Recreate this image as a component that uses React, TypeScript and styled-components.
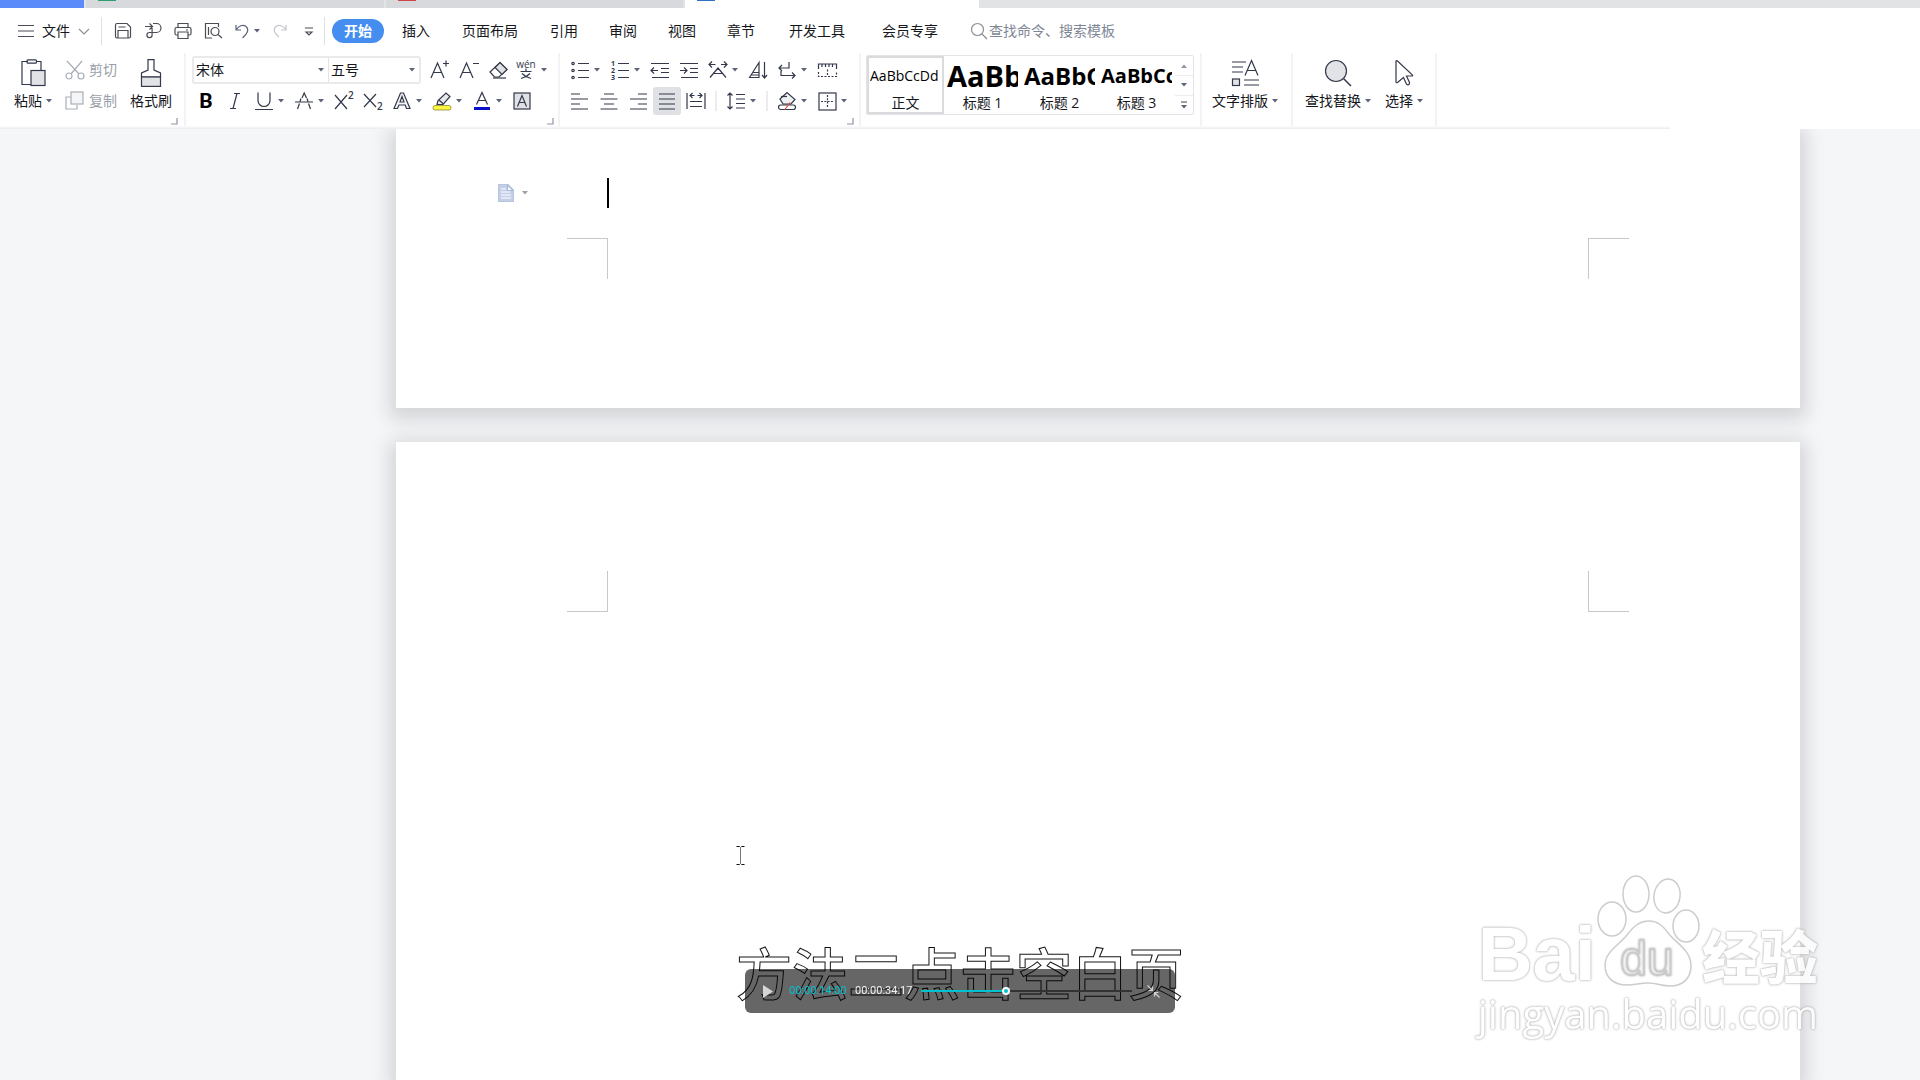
import React from "react";
import styled, { createGlobalStyle } from "styled-components";

const uiFont = `"Open Sans", "Noto Sans CJK SC", sans-serif`;
const ink = "#33384a";
const muted = "#a9adb6";

const GlobalStyle = createGlobalStyle`
  * { box-sizing: border-box; }
  body {
    margin: 0;
    background: #f5f6f8;
    color: #15171c;
    font-family: ${uiFont};
    font-size: 14px;
    line-height: 20px;
  }
  button, select, input { font: inherit; color: inherit; }
`;

const Screen = styled.div`
  display: flex;
  flex-direction: column;
  height: 100vh;
  overflow: hidden;
`;

/* ---------- window tabs ---------- */

const TabStrip = styled.nav`
  display: flex;
  height: 8px;
  background: #e2e3e5;
  overflow: hidden;
`;

const DocTab = styled.button<{ $width: number; $bg: string }>`
  display: flex;
  align-items: flex-start;
  width: ${(p) => p.$width}px;
  height: 8px;
  padding: 0 0 0 12px;
  border: 0;
  border-right: 2px solid #e2e3e5;
  background: ${(p) => p.$bg};
`;

const TabBadge = styled.span<{ $color: string }>`
  width: 18px;
  height: 1px;
  background: ${(p) => p.$color};
`;

/* ---------- header ---------- */

const Header = styled.header`
  position: relative;
  z-index: 1;
  flex: none;
  background: #fff;
`;

const HeaderEdge = styled.div`
  height: 3px;
  margin-right: 250px;
  background: linear-gradient(#fdfdfd, #ececee);
`;

const MenuBar = styled.div`
  display: flex;
  align-items: center;
  height: 45px;
  padding-left: 18px;
`;

const PlainButton = styled.button`
  display: flex;
  align-items: center;
  padding: 0;
  border: 0;
  background: none;
  white-space: nowrap;
`;

const FileButton = styled(PlainButton)`
  gap: 8px;
  margin-right: 11px;
`;

const BarRule = styled.span`
  width: 1px;
  height: 28px;
  background: #dfe0e3;
`;

const QuickTools = styled.div`
  display: flex;
  align-items: center;
  gap: 12px;
  padding: 0 10px 0 12px;
`;

const QuickButton = styled(PlainButton)`
  gap: 4px;
`;

const QuickMore = styled(QuickButton)`
  margin-left: 4px;
`;

const MenuTabs = styled.nav`
  display: flex;
  align-items: center;
  gap: 1px;
  padding-left: 7px;
`;

const MenuTab = styled(PlainButton)<{ $pad?: number }>`
  height: 24px;
  padding: 0 ${(p) => p.$pad ?? 15}px;
`;

const ActiveTab = styled(MenuTab)`
  padding: 0 12px;
  margin-right: 2px;
  border-radius: 12px;
  background: #458ef0;
  color: #fff;
  font-weight: 700;
`;

const SearchBox = styled.label`
  display: flex;
  align-items: center;
  gap: 1px;
  margin-left: 14px;
`;

const SearchInput = styled.input`
  width: 180px;
  padding: 0;
  border: 0;
  outline: 0;
  background: none;
  &::placeholder { color: #7f8796; opacity: 1; }
`;

/* ---------- ribbon ---------- */

const Ribbon = styled.div`
  display: flex;
  height: 73px;
`;

const Group = styled.section<{ $left: number; $right: number }>`
  display: flex;
  flex-direction: column;
  justify-content: space-between;
  padding: 2px ${(p) => p.$right}px 0 ${(p) => p.$left}px;
  border-right: 2px solid #f3f3f5;
`;

const GroupBody = styled.div<{ $gap?: number }>`
  display: flex;
  align-items: flex-start;
  gap: ${(p) => p.$gap ?? 0}px;
`;

const Launcher = styled(PlainButton)`
  align-self: flex-end;
  height: 8px;
  margin: 0 -6px 1px 0;
`;

const Stack = styled.div`
  display: flex;
  flex-direction: column;
  gap: 1px;
`;

const ToolRow = styled.div<{ $indent?: number }>`
  display: flex;
  align-items: center;
  gap: 9px;
  height: 30px;
  padding-left: ${(p) => p.$indent ?? 0}px;
`;

const ToolButton = styled(PlainButton)<{ $split?: boolean }>`
  justify-content: flex-start;
  gap: 4px;
  width: ${(p) => (p.$split ? 31 : 20)}px;
  height: 28px;
`;

const PressedTool = styled(ToolButton)`
  width: 28px;
  margin: 0 -4px;
  justify-content: center;
  border-radius: 3px;
  background: #dfe1e5;
`;

const ToolRule = styled.span`
  width: 2px;
  height: 20px;
  background: #ececef;
`;

const LargeButton = styled.button`
  display: flex;
  flex-direction: column;
  align-items: center;
  gap: 4px;
  padding: 4px 0 0;
  border: 0;
  background: none;
`;

const LargeLabel = styled.span`
  display: flex;
  align-items: center;
  gap: 4px;
  line-height: 20px;
  white-space: nowrap;
`;

const ClipButton = styled(PlainButton)`
  gap: 4px;
  height: 30px;
  color: #9a9faa;
`;

const ComboPair = styled.div`
  display: flex;
  height: 28px;
  border: 2px solid #e9eaec;
  border-radius: 3px;
`;

const Combo = styled.label<{ $width: number }>`
  display: grid;
  align-items: center;
  width: ${(p) => p.$width}px;
  & + & { border-left: 1px solid #e2e3e6; }
  & > * { grid-area: 1 / 1; }
  & > svg { justify-self: end; margin-right: 4px; pointer-events: none; }
`;

const ComboSelect = styled.select`
  appearance: none;
  width: 100%;
  height: 24px;
  padding: 0 2px;
  border: 0;
  background: none;
  outline: 0;
`;

const Gallery = styled.div`
  display: flex;
  height: 60px;
  border: 1px solid #e3e4e7;
  border-radius: 2px;
`;

const StyleCard = styled.button<{ $selected?: boolean }>`
  display: flex;
  flex-direction: column;
  align-items: center;
  width: 77px;
  padding: 1px 3px 0;
  border: 0;
  background: #fff;
  box-shadow: ${(p) => (p.$selected ? "inset 0 0 0 2px #dadbdd" : "none")};
`;

const StyleSample = styled.span<{ $size: number; $bold?: boolean }>`
  width: 71px;
  height: 36px;
  overflow: hidden;
  color: #000;
  font-family: "Open Sans", sans-serif;
  font-size: ${(p) => p.$size}px;
  font-weight: ${(p) => (p.$bold ? 700 : 400)};
  line-height: 38px;
  text-align: left;
  white-space: nowrap;
`;

const GalleryScroll = styled.div`
  display: grid;
  grid-template-rows: repeat(3, 1fr);
  width: 18px;
`;

const ScrollButton = styled(PlainButton)`
  justify-content: center;
  & + & { border-top: 1px solid #ececef; }
`;

/* ---------- document ---------- */

const Workspace = styled.main`
  display: flex;
  flex: 1;
  flex-direction: column;
  gap: 34px;
  min-height: 0;
  padding: 0 120px 0 396px;
`;

const Page = styled.article<{ $grow?: boolean }>`
  display: flex;
  flex: ${(p) => (p.$grow ? "1" : "none")};
  flex-direction: column;
  padding: ${(p) => (p.$grow ? "129px 171px 0" : "49px 171px 129px")};
  background: #fff;
  box-shadow: 0 5px 18px 6px rgba(20, 22, 30, 0.15);
`;

const Paragraph = styled.div`
  display: flex;
  align-items: center;
  height: 30px;
  margin: 0 0 30px -69px;
`;

const PasteHint = styled(PlainButton)`
  gap: 8px;
  margin-right: 79px;
`;

const Caret = styled.span`
  width: 2px;
  height: 30px;
  background: #000;
`;

const MarginRow = styled.div`
  display: flex;
  justify-content: space-between;
`;

const CropMark = styled.span<{ $top?: boolean; $left?: boolean }>`
  width: 41px;
  height: 41px;
  border: 0 solid #c8c8c8;
  border-top-width: ${(p) => (p.$top ? 1 : 0)}px;
  border-bottom-width: ${(p) => (p.$top ? 0 : 1)}px;
  border-left-width: ${(p) => (p.$left ? 1 : 0)}px;
  border-right-width: ${(p) => (p.$left ? 0 : 1)}px;
`;

/* ---------- overlays ---------- */

const Pointer = styled.svg`
  position: fixed;
  z-index: 2;
  left: 736px;
  top: 845px;
`;

const Subtitle = styled.p`
  position: fixed;
  z-index: 3;
  left: 0;
  right: 0;
  bottom: 74px;
  margin: 0;
  color: #fff;
  font-family: "Noto Sans CJK SC", sans-serif;
  font-size: 56px;
  font-weight: 500;
  line-height: 70px;
  text-align: center;
  -webkit-text-stroke: 1px #111;
  pointer-events: none;
`;

const Player = styled.div`
  position: fixed;
  z-index: 4;
  left: 50%;
  bottom: 67px;
  display: flex;
  align-items: center;
  width: 430px;
  height: 44px;
  padding: 0 15px 0 17px;
  border-radius: 6px;
  background: rgba(0, 0, 0, 0.6);
  transform: translateX(-50%);
`;

const Clock = styled.time<{ $color: string }>`
  width: 58px;
  margin-right: 8px;
  color: ${(p) => p.$color};
  font-family: Roboto, sans-serif;
  font-size: 11px;
  line-height: 16px;
`;

const Seek = styled.input`
  appearance: none;
  flex: 1;
  min-width: 0;
  height: 10px;
  margin: 0 15px 0 0;
  background: linear-gradient(#00c3cf, #00c3cf) 0 50% / 40% 2px no-repeat,
    linear-gradient(#333, #333) 0 50% / 100% 2px no-repeat;
  &::-webkit-slider-thumb {
    appearance: none;
    width: 8px;
    height: 8px;
    border: 2px solid #fff;
    border-radius: 50%;
    background: #00c3cf;
  }
`;

const PlayButton = styled(PlainButton)`
  margin-right: 16px;
`;

const Watermark = styled.div`
  position: fixed;
  z-index: 5;
  right: 102px;
  bottom: 40px;
  display: flex;
  flex-direction: column;
  align-items: center;
  color: #fff;
  opacity: 0.8;
  text-shadow: 0 0 1px #aaa, 0 0 2px #aaa, 0 0 3px #bbb;
  pointer-events: none;
`;

const Brand = styled.div`
  display: flex;
  align-items: flex-end;
  height: 116px;
`;

const BrandLatin = styled.span`
  font-family: "Liberation Sans", sans-serif;
  font-size: 76px;
  font-weight: 700;
  line-height: 68px;
`;

const BrandCjk = styled.span`
  margin-left: 2px;
  font-family: "Noto Sans CJK SC", sans-serif;
  font-size: 58px;
  font-weight: 900;
  line-height: 68px;
`;

const BrandUrl = styled.span`
  font-family: "Open Sans", sans-serif;
  font-size: 40px;
  line-height: 52px;
`;

/* ---------- icons ---------- */

type IconProps = { w?: number; h?: number; color?: string; children: React.ReactNode };

const IconSvg = styled.svg`
  flex-shrink: 0;
  overflow: visible;
`;

const Icon = ({ w = 20, h = 20, color = ink, children }: IconProps) => (
  <IconSvg
    width={w}
    height={h}
    viewBox={`0 0 ${w} ${h}`}
    fill="none"
    stroke={color}
    strokeWidth="1.2"
    aria-hidden="true"
  >
    {children}
  </IconSvg>
);

const Drop = ({ color = "#5b6478" }: { color?: string }) => (
  <svg width="6" height="4" viewBox="0 0 6 4" aria-hidden="true">
    <path d="M0 0h6L3 3.6z" fill={color} />
  </svg>
);

const LaunchMark = () => (
  <Icon w={7} h={7} color="#8d95a8">
    <path d="M6 0v6H0" />
  </Icon>
);

const lines = (ys: number[], x1: number, x2: number) =>
  ys.map((y) => `M${x1} ${y}H${x2}`).join("");

const icons = {
  menu: (
    <Icon w={16} color="#4a4d55"><path d="M0 4.5h16M0 10h16M0 15.500h16" /></Icon>
  ),
  chevron: (
    <Icon w={12} color="#8b8f98"><path d="M1 8l5 5 5-5" /></Icon>
  ),
  save: (
    <Icon w={18} h={18} color="#4a4d55">
      <path d="M1.5 3q0-1.500 1.500-1.500h10l3.500 3.500v9.500q0 1.500-1.500 1.500h-12q-1.500 0-1.500-1.500zM4 16V8.500h10V16M4.500 5h7" />
    </Icon>
  ),
  share: (
    <Icon w={18} h={18} color="#4a4d55">
      <path d="M1 4.500h7M5.500 1.500l3 3-3 3M9 1.500h3.500a4.500 4.500 0 0 1 0 9H5.500a2.600 2.600 0 1 0 2.600 2.600V4.500" />
    </Icon>
  ),
  print: (
    <Icon w={18} h={18} color="#4a4d55">
      <path d="M4 5.500v-4h10v4M4 13H2.500q-1.500 0-1.500-1.500V7q0-1.500 1.500-1.500h13Q17 5.500 17 7v4.500q0 1.500-1.500 1.500H14M4 10h10v6.500H4zM12 8h2" />
    </Icon>
  ),
  preview: (
    <Icon w={18} h={18} color="#4a4d55">
      <path d="M8 16H1.500V1.500h13V5M4.500 5v8" />
      <circle cx="11" cy="9.500" r="4" />
      <path d="M14 12.500l4 3.500" />
    </Icon>
  ),
  undo: (
    <Icon w={16} h={18} color="#5b6478">
      <path d="M2 3v5h5M2 8c2.500-4 7-6 10-3.500 3.500 3 1.500 7-3.500 11.500" />
    </Icon>
  ),
  redo: (
    <Icon w={16} h={18} color="#c3c6cc">
      <path d="M14 3v5H9M14 8C11.500 4 7 2 4 4.500.5 7.500 2.500 11.500 7 15" />
    </Icon>
  ),
  more: (
    <Icon w={10} h={18} color="#4a4d55"><path d="M1 6h8M2 10l3 3 3-3z" /></Icon>
  ),
  search: (
    <Icon w={18} h={18} color="#8b8f98">
      <circle cx="7.500" cy="7.500" r="6" />
      <path d="M12 12l5 5" />
    </Icon>
  ),
  paste: (
    <Icon w={28} h={28}>
      <path d="M9 2.500H3v23h10M17 2.500h5V11" />
      <rect x="8" y="0.800" width="9.500" height="3.400" rx="1" />
      <rect x="12" y="11.500" width="14" height="15" fill="#e1e3e7" />
    </Icon>
  ),
  cut: (
    <Icon color={muted}>
      <path d="M2 1l12 13M17 1L6 14" />
      <circle cx="4" cy="16" r="3" />
      <circle cx="16" cy="16" r="3" />
    </Icon>
  ),
  copy: (
    <Icon color={muted}>
      <path d="M6 6H1v12h11v-4" />
      <rect x="6" y="1" width="12" height="12" fill="#f4f5f6" />
    </Icon>
  ),
  brush: (
    <Icon w={24} h={28}>
      <path d="M9 .600h6v10.400l6.500 3v4h-19v-4L9 11z" />
      <rect x="2.500" y="18" width="19" height="9.400" fill="#e1e3e7" />
    </Icon>
  ),
  grow: (
    <Icon><path d="M1 18L7.500 3 14 18M3.500 12.500h8M13 3.500h6M16 .500v6" /></Icon>
  ),
  shrink: (
    <Icon><path d="M1 18L7.500 3 14 18M3.500 12.500h8M14 3.500h6" /></Icon>
  ),
  eraser: (
    <Icon>
      <path d="M2 12L12 2.500l7 7L11 17H6.500z" fill="#fff" />
      <path d="M7 7.500l5-5 7 7-5 5z" fill="#dfe1e5" />
      <path d="M5 18h13" />
    </Icon>
  ),
  bold: (
    <Icon>
      <text x="10" y="17" fontSize="21" fontWeight="700" textAnchor="middle" fill="#000" stroke="none" fontFamily="Roboto, sans-serif">B</text>
    </Icon>
  ),
  italic: (
    <Icon><path d="M9 2.500h6M5 17.500h6M12 2.500l-4 15" /></Icon>
  ),
  underline: (
    <Icon><path d="M4 1.500v8a6 6 0 0 0 12 0v-8M1 18.500h18" /></Icon>
  ),
  strike: (
    <Icon><path d="M3.500 18l2-5.500M8 7l2.200-5L12.500 7M14.500 12.500l2 5.500M1 11h18M7 7.500l-1 3M13 7.500l1 3" /></Icon>
  ),
  sup: (
    <Icon>
      <path d="M1 4l12 14M13 4L1 18" />
      <text x="14" y="8" fontSize="10" fontWeight="600" fill={ink} stroke="none" fontFamily="Open Sans, sans-serif">2</text>
    </Icon>
  ),
  sub: (
    <Icon>
      <path d="M1 3l12 13M13 3L1 16" />
      <text x="14" y="19" fontSize="10" fontWeight="600" fill={ink} stroke="none" fontFamily="Open Sans, sans-serif">2</text>
    </Icon>
  ),
  outline: (
    <Icon><path d="M2 17.500L8.500 2h3L18 17.500h-3.500l-1.300-3.500H7l-1.500 3.500zM8 11h4L10 5.500z" fill="#f3f4f6" /></Icon>
  ),
  highlight: (
    <Icon>
      <path d="M5 13.500l1-4L14 2l4 3.500-7 8z" fill="#e9eaed" />
      <path d="M7 9l4.500 4" />
      <rect x="1" y="14.500" width="18" height="4.500" rx="2" fill="#fdf53c" stroke="#8b8a3c" strokeWidth="0.800" />
    </Icon>
  ),
  color: (
    <Icon>
      <path d="M4.500 13.500L10 1.500l5.500 12M6.500 9.500h7" />
      <path d="M2 17.500h16" stroke="#0a10c8" strokeWidth="3" />
    </Icon>
  ),
  shade: (
    <Icon>
      <rect x="2" y="2" width="16" height="16" fill="#dfe1e5" />
      <path d="M5.500 15.500L10 4.500l4.500 11M7 11.500h6" />
    </Icon>
  ),
  phonetic: (
    <Icon>
      <text x="9" y="8" fontSize="10" textAnchor="middle" fill={ink} stroke="none" fontFamily="Open Sans, sans-serif">wén</text>
      <path d="M9 8.500v2.500M3.500 11.500h11M5 13.500q4 4 9 5M13 13.500q-4 4-9 5" />
    </Icon>
  ),
  bullets: (
    <Icon>
      <path d={lines([3.5, 10.5, 17.5], 8, 19)} />
      <circle cx="3" cy="3.500" r="1.200" /><circle cx="3" cy="10.500" r="1.200" /><circle cx="3" cy="17.500" r="1.200" />
    </Icon>
  ),
  numbers: (
    <Icon>
      <path d={lines([3.5, 10.5, 17.5], 8, 19)} />
      <g fontSize="7" fontWeight="700" fill={ink} stroke="none" fontFamily="Open Sans, sans-serif">
        <text x="1" y="6">1</text><text x="1" y="13">2</text><text x="1" y="20">3</text>
      </g>
    </Icon>
  ),
  outdent: (
    <Icon><path d="M1 3.500h18M11 8.500h8M11 12.500h8M2 17.500h17M1 10.500h7M4 7.500l-3 3 3 3" /></Icon>
  ),
  indent: (
    <Icon><path d="M1 3.500h18M11 8.500h8M11 12.500h8M2 17.500h17M1 10.500h7M5 7.500l3 3-3 3" /></Icon>
  ),
  scaleText: (
    <Icon><path d="M2 17.500L10 8l8 9.500M5.500 13.500h9M1 4.500h6.500M13 4.500h6M4 1.500l-3 3 3 3M16 1.500l3 3-3 3" /></Icon>
  ),
  sort: (
    <Icon><path d="M1.500 17.500L11 2.500v15zM5 12.500h6M3 15h8M16.500 2v16M14 15l2.500 3 2.500-3" /></Icon>
  ),
  wrap: (
    <Icon><path d="M12 2v6H2M5 5L2 8l3 3M4 11v4.500h14M15 12.500l3 3-3 3" /></Icon>
  ),
  ruler: (
    <Icon>
      <path d="M1.500 9V4h18v5M5 4v3M8.500 4v3M12 4v3M15.500 4v3" />
      <path d="M1.500 12v4.500h18V12M10.500 9.500v6" strokeDasharray="2 1.500" />
    </Icon>
  ),
  left: <Icon><path d="M1 3h9M1 8h17M1 13h9M1 18h17" /></Icon>,
  center: <Icon><path d="M5 3h10M1.500 8h17M5 13h10M1.500 18h17" /></Icon>,
  right: <Icon><path d="M10 3h9M2 8h17M10 13h9M2 18h17" /></Icon>,
  justify: <Icon><path d="M2 3h16M2 8h16M2 13h16M2 18h16" /></Icon>,
  distribute: (
    <Icon><path d="M1 2v16M19 2v16M4 10.500h12M4 15.500h12M4 4.500h4.500M11.500 4.500H16M6.500 2L4 4.500 6.500 7M13.500 2L16 4.500 13.500 7" /></Icon>
  ),
  spacing: (
    <Icon><path d="M4 2v16M1.500 4.500L4 2l2.500 2.500M1.500 15.500L4 18l2.500-2.500M10 3.500h9M10 8h9M10 12.500h9M10 17h9" /></Icon>
  ),
  fill: (
    <Icon>
      <path d="M3 8l7-6.500 8 7L14 13H6z" fill="#eef0f2" />
      <path d="M4 5.500h6" />
      <rect x="1.500" y="14" width="17" height="4.500" rx="2.200" />
      <path d="M8 18.500l5-7" stroke="#e0523f" />
    </Icon>
  ),
  borders: (
    <Icon>
      <rect x="2" y="2" width="17" height="17" />
      <path d="M10.500 4v13M4 10.500h13" strokeDasharray="2 1.300" />
    </Icon>
  ),
  layout: (
    <Icon w={28} h={28}>
      <path d="M1 3h14M1 8h11M1 13h11M14 16.500L20.500 1.500 27 16.500M16.500 11.500h8M13 21h15M13 26h15" />
      <rect x="1.500" y="20" width="7" height="6.500" fill="#e1e3e7" />
    </Icon>
  ),
  find: (
    <Icon w={28} h={28}>
      <circle cx="12" cy="12" r="10.500" fill="#e1e3e7" />
      <path d="M19.500 19.500l7.500 7.500" strokeWidth="1.500" />
    </Icon>
  ),
  select: (
    <Icon w={20} h={28}>
      <path d="M2 2.500q0-1.500 1.500-.5L18.500 16q.5 1-1 1h-5l3 6.500q.3 1.500-1 2.200-1.500.500-2.200-1L9.500 18.500l-6 5q-1.500.800-1.500-1z" />
    </Icon>
  ),
};

type Tool = { name: string; icon: React.ReactNode; split?: boolean; pressed?: boolean };

const fontRowTop: Tool[] = [
  { name: "增大字号", icon: icons.grow },
  { name: "减小字号", icon: icons.shrink },
  { name: "清除格式", icon: icons.eraser },
  { name: "拼音指南", icon: icons.phonetic, split: true },
];

const fontRowBottom: Tool[] = [
  { name: "加粗", icon: icons.bold },
  { name: "倾斜", icon: icons.italic },
  { name: "下划线", icon: icons.underline, split: true },
  { name: "删除线", icon: icons.strike, split: true },
  { name: "上标", icon: icons.sup },
  { name: "下标", icon: icons.sub },
  { name: "文字效果", icon: icons.outline, split: true },
  { name: "突出显示", icon: icons.highlight, split: true },
  { name: "字体颜色", icon: icons.color, split: true },
  { name: "字符底纹", icon: icons.shade },
];

const paraRowTop: Tool[] = [
  { name: "项目符号", icon: icons.bullets, split: true },
  { name: "编号", icon: icons.numbers, split: true },
  { name: "减少缩进量", icon: icons.outdent },
  { name: "增加缩进量", icon: icons.indent },
  { name: "中文版式", icon: icons.scaleText, split: true },
  { name: "排序", icon: icons.sort },
  { name: "显示段落标记", icon: icons.wrap, split: true },
  { name: "制表位", icon: icons.ruler },
];

const alignTools: Tool[] = [
  { name: "左对齐", icon: icons.left },
  { name: "居中对齐", icon: icons.center },
  { name: "右对齐", icon: icons.right },
  { name: "两端对齐", icon: icons.justify, pressed: true },
  { name: "分散对齐", icon: icons.distribute },
];

const Tools = ({ items }: { items: Tool[] }) => (
  <>
    {items.map((t) =>
      t.pressed ? (
        <PressedTool key={t.name} aria-label={t.name} aria-pressed="true">{t.icon}</PressedTool>
      ) : (
        <ToolButton key={t.name} aria-label={t.name} $split={t.split}>
          {t.icon}
          {t.split && <Drop />}
        </ToolButton>
      )
    )}
  </>
);

const Large = ({ icon, label, drop }: { icon: React.ReactNode; label: string; drop?: boolean }) => (
  <LargeButton>
    {icon}
    <LargeLabel>
      {label}
      {drop && <Drop />}
    </LargeLabel>
  </LargeButton>
);

const styleCards = [
  { label: "正文", size: 14 },
  { label: "标题 1", size: 29, bold: true },
  { label: "标题 2", size: 24, bold: true },
  { label: "标题 3", size: 20, bold: true },
];

const menuTabs = [
  { label: "插入" },
  { label: "页面布局", pad: 16 },
  { label: "引用" },
  { label: "审阅" },
  { label: "视图" },
  { label: "章节" },
  { label: "开发工具", pad: 18 },
  { label: "会员专享", pad: 18 },
];

const Paw = () => (
  <svg width="104" height="114" viewBox="0 0 104 114" fill="#fff" stroke="#c0c0c0" strokeWidth="1.500" aria-hidden="true">
    <ellipse cx="16" cy="45" rx="14" ry="17" />
    <ellipse cx="40" cy="20" rx="13" ry="18" />
    <ellipse cx="71" cy="22" rx="13" ry="17" transform="rotate(10 71 22)" />
    <ellipse cx="90" cy="52" rx="13" ry="16" />
    <path d="M53 47c9 0 14 5 20 13 7 9 22 16 22 32 0 13-9 20-21 20-8 0-14-3-22-3s-13 2-21 2C18 111 9 104 9 91c0-13 14-20 22-30 6-8 12-14 22-14z" />
    <text x="51" y="101" fontSize="48" textAnchor="middle" fontFamily="Liberation Sans, sans-serif" strokeWidth="1">du</text>
  </svg>
);

export default function App() {
  return (
    <Screen>
      <GlobalStyle />
      <Header>
        <TabStrip aria-label="文档标签">
          <DocTab $width={86} $bg="#5b8bfb" aria-label="首页" />
          <DocTab $width={300} $bg="#d8d9dc" aria-label="表格"><TabBadge $color="#2f9e6e" /></DocTab>
          <DocTab $width={299} $bg="#d8d9dc" aria-label="演示"><TabBadge $color="#cf4545" /></DocTab>
          <DocTab $width={296} $bg="#fff" aria-label="文字"><TabBadge $color="#2f6fc4" /></DocTab>
        </TabStrip>

        <MenuBar>
          <FileButton>{icons.menu}文件{icons.chevron}</FileButton>
          <BarRule />
          <QuickTools>
            <QuickButton aria-label="保存">{icons.save}</QuickButton>
            <QuickButton aria-label="输出">{icons.share}</QuickButton>
            <QuickButton aria-label="打印">{icons.print}</QuickButton>
            <QuickButton aria-label="打印预览">{icons.preview}</QuickButton>
            <QuickButton aria-label="撤销">{icons.undo}<Drop /></QuickButton>
            <QuickButton aria-label="恢复">{icons.redo}</QuickButton>
            <QuickMore aria-label="自定义快速访问">{icons.more}</QuickMore>
          </QuickTools>
          <BarRule />
          <MenuTabs>
            <ActiveTab>开始</ActiveTab>
            {menuTabs.map((t) => (
              <MenuTab key={t.label} $pad={t.pad}>{t.label}</MenuTab>
            ))}
          </MenuTabs>
          <SearchBox>
            {icons.search}
            <SearchInput aria-label="查找命令" placeholder="查找命令、搜索模板" />
          </SearchBox>
        </MenuBar>

        <Ribbon>
          <Group $left={14} $right={12}>
            <GroupBody $gap={13}>
              <Large icon={icons.paste} label="粘贴" drop />
              <Stack>
                <ClipButton>{icons.cut}剪切</ClipButton>
                <ClipButton>{icons.copy}复制</ClipButton>
              </Stack>
              <Large icon={icons.brush} label="格式刷" />
            </GroupBody>
            <Launcher aria-label="剪贴板设置"><LaunchMark /></Launcher>
          </Group>

          <Group $left={6} $right={10}>
            <Stack>
              <ToolRow>
                <ComboPair>
                  <Combo $width={134}>
                    <ComboSelect aria-label="字体" defaultValue="宋体"><option>宋体</option></ComboSelect>
                    <Drop />
                  </Combo>
                  <Combo $width={91}>
                    <ComboSelect aria-label="字号" defaultValue="五号"><option>五号</option></ComboSelect>
                    <Drop />
                  </Combo>
                </ComboPair>
                <Tools items={fontRowTop} />
              </ToolRow>
              <ToolRow $indent={4}><Tools items={fontRowBottom} /></ToolRow>
            </Stack>
            <Launcher aria-label="字体设置"><LaunchMark /></Launcher>
          </Group>

          <Group $left={10} $right={11}>
            <Stack>
              <ToolRow><Tools items={paraRowTop} /></ToolRow>
              <ToolRow>
                <Tools items={alignTools} />
                <ToolRule />
                <Tools items={[{ name: "行距", icon: icons.spacing, split: true }]} />
                <ToolRule />
                <Tools
                  items={[
                    { name: "底纹颜色", icon: icons.fill, split: true },
                    { name: "边框", icon: icons.borders, split: true },
                  ]}
                />
              </ToolRow>
            </Stack>
            <Launcher aria-label="段落设置"><LaunchMark /></Launcher>
          </Group>

          <Group $left={5} $right={6}>
            <Gallery>
              {styleCards.map((c, i) => (
                <StyleCard key={c.label} $selected={i === 0}>
                  <StyleSample $size={c.size} $bold={c.bold}>AaBbCcDd</StyleSample>
                  {c.label}
                </StyleCard>
              ))}
              <GalleryScroll>
                <ScrollButton aria-label="上一行">
                  <Icon w={6} h={4} color="none"><path d="M0 4h6L3 .4z" fill="#8d95a8" /></Icon>
                </ScrollButton>
                <ScrollButton aria-label="下一行"><Drop /></ScrollButton>
                <ScrollButton aria-label="更多样式">
                  <Icon w={8} h={8} color="#5b6478"><path d="M1 1h6" /><path d="M1 4h6L4 7.600z" fill="#5b6478" stroke="none" /></Icon>
                </ScrollButton>
              </GalleryScroll>
            </Gallery>
          </Group>

          <Group $left={10} $right={13}>
            <Large icon={icons.layout} label="文字排版" drop />
          </Group>

          <Group $left={12} $right={12}>
            <GroupBody $gap={14}>
              <Large icon={icons.find} label="查找替换" drop />
              <Large icon={icons.select} label="选择" drop />
            </GroupBody>
          </Group>
        </Ribbon>
        <HeaderEdge />
      </Header>

      <Workspace>
        <Page>
          <Paragraph>
            <PasteHint aria-label="粘贴选项">
              <Icon w={16} h={18} color="#b9c6e0">
                <path d="M.6.600h9.400l5.400 5.400v11.400H.6z" fill="#c3d0e8" />
                <path d="M3 5h5M3 8h9M3 11h10M3 14h10" stroke="#fff" />
                <path d="M9.500 1v5.500H15z" fill="#fff" stroke="#a9bbdd" />
              </Icon>
              <Drop color="#a0a0a0" />
            </PasteHint>
            <Caret />
          </Paragraph>
          <MarginRow>
            <CropMark $top />
            <CropMark $top $left />
          </MarginRow>
        </Page>
        <Page $grow>
          <MarginRow>
            <CropMark />
            <CropMark $left />
          </MarginRow>
        </Page>
      </Workspace>

      <Pointer width="9" height="21" viewBox="0 0 9 21" fill="none" aria-hidden="true">
        <path d="M.5 1.500h3.200M5.300 1.500h3.200M.5 19.500h3.200M5.300 19.500h3.200" stroke="#111" />
        <path d="M4.500 2v17" stroke="#777" />
      </Pointer>

      <Subtitle>方法二点击空白页</Subtitle>

      <Player>
        <PlayButton aria-label="播放">
          <svg width="11" height="13" viewBox="0 0 11 13" aria-hidden="true">
            <path d="M1 0l10 6.500L1 13z" fill="#d6d6d6" />
          </svg>
        </PlayButton>
        <Clock $color="#00c3cf">00:00:14:00</Clock>
        <Clock $color="#f0f0f0">00:00:34:17</Clock>
        <Seek type="range" aria-label="播放进度" min={0} max={100} defaultValue={40} />
        <PlainButton aria-label="收起">
          <Icon w={13} h={13} color="#cfcfcf">
            <path d="M.5.500l5 5M5.500 1.500v4h-4M12.500 12.500l-5-5M7.500 11.500v-4h4" />
          </Icon>
        </PlainButton>
      </Player>

      <Watermark>
        <Brand>
          <BrandLatin>Bai</BrandLatin>
          <Paw />
          <BrandCjk>经验</BrandCjk>
        </Brand>
        <BrandUrl>jingyan.baidu.com</BrandUrl>
      </Watermark>
    </Screen>
  );
}
